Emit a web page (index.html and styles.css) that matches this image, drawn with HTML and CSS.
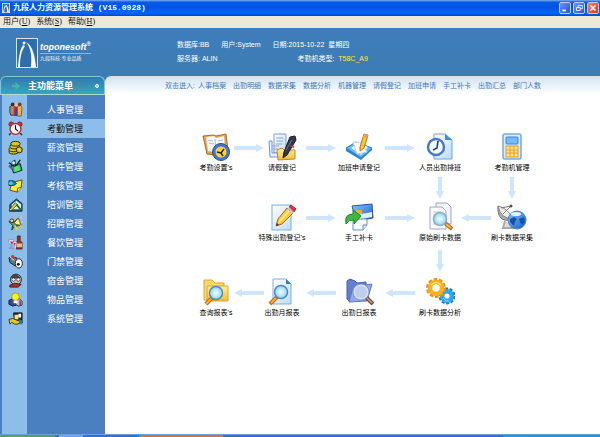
FILE: index.html
```html
<!DOCTYPE html>
<html lang="zh-CN">
<head>
    <meta charset="UTF-8">
    <meta name="viewport" content="width=device-width, initial-scale=1.0">
    <title>九段人力资源管理系统</title>
    <link rel="stylesheet" href="styles.css">
</head>
<body>
    <div class="titlebar">
        <svg class="app-icon" viewBox="0 0 22 30" preserveAspectRatio="none"><rect x="1" y="1" width="20" height="28" fill="#2f72b4" stroke="#fff" stroke-width="2"/><path d="M3 28Q5 13 9 7L11 9Q6 15 6 28z" fill="#fff"/><path d="M10 4Q17 9 19 28H14Q14 13 10 4z" fill="#fff"/></svg>
        <h1>九段人力资源管理系统 (V15.0928)</h1>
        <div class="window-buttons">
            <button class="win-btn" aria-label="最小化"><svg viewBox="0 0 12 12"><path d="M3 9h4" stroke="#fff" stroke-width="2"/></svg></button>
            <button class="win-btn" aria-label="还原"><svg viewBox="0 0 12 12"><path d="M5 5V3h5v4H8M3 5.500h4.500V9H3z" fill="none" stroke="#fff"/></svg></button>
            <button class="win-btn close" aria-label="关闭"><svg viewBox="0 0 12 12"><path d="M3 3l6 6M9 3L3 9" stroke="#fff" stroke-width="1.700"/></svg></button>
        </div>
    </div>

    <div class="menubar">
        <button>用户(<u>U</u>)</button>
        <button>系统(<u>S</u>)</button>
        <button>帮助(<u>H</u>)</button>
    </div>

    <header class="header">
        <div class="brand">
            <svg class="brand-mark" viewBox="0 0 22 30"><rect x=".5" y=".5" width="21" height="29" fill="#2f6eae" stroke="#d5e6f5"/><path d="M2 29C3 18 4 11 7 7L9 8C5 14 4 20 4 29z" fill="#fff"/><path d="M10 4C16 7 19 17 20 29H15C16 18 15 10 10 4z" fill="#fff"/><circle cx="8" cy="5" r="1.500" fill="#fff"/></svg>
            <div class="brand-text">
                <div class="brand-name">toponesoft<sup>®</sup></div>
                <div class="brand-slogan">九段科技.专业品质</div>
            </div>
        </div>
        <div class="session">
            <div class="session-row">
                <span>数据库:BB</span>
                <span>用户:System</span>
                <span>日期:2015-10-22&nbsp; 星期四</span>
            </div>
            <div class="session-row machine">
                <span>服务器: ALIN</span>
                <span>考勤机类型:&nbsp; <b>T58C_A9</b></span>
            </div>
        </div>
    </header>

    <div class="content">
        <aside class="sidebar">
            <div class="sidebar-title">
                <svg viewBox="0 0 9 9"><path d="M0 3h4V0l5 4.500L4 9V6H0z" fill="#4fb0a8"/></svg>
                <h2>主功能菜单</h2>
                <span class="dot"></span>
            </div>
            <nav class="menu">
                <a href="#"><span class="menu-icon"><svg viewBox="0 0 16 16"><path d="M2 5l3-2 2 2v9H3L2 11z" fill="#b98b62" stroke="#333"/><path d="M6 5l3-2 2 2v10H6z" fill="#e8272c"/><path d="M8 5l2 1v9H7z" fill="#2345d3"/><path d="M10 5l3-2 2 3-1 9h-4z" fill="#f4b12e" stroke="#6d3c16" stroke-width=".700"/><circle cx="5" cy="2.500" r="2" fill="#432a1c"/><circle cx="9" cy="3" r="2" fill="#e6c4a0"/><circle cx="12.500" cy="2.500" r="2" fill="#704029"/></svg></span><span class="menu-label">人事管理</span></a>
                <a href="#" class="active"><span class="menu-icon"><svg viewBox="0 0 16 16"><path d="M3 13l-2 2M13 13l2 2" stroke="#333" stroke-width="1.500"/><circle cx="3.500" cy="3.500" r="2.500" fill="#e52b2e" stroke="#222" stroke-width=".700"/><circle cx="12.500" cy="3.500" r="2.500" fill="#e52b2e" stroke="#222" stroke-width=".700"/><circle cx="8" cy="8.500" r="5.800" fill="#fff" stroke="#c9232c" stroke-width="1.500"/><path d="M8 4.500v4l3 2.500" fill="none" stroke="#111" stroke-width="1.200"/></svg></span><span class="menu-label">考勤管理</span></a>
                <a href="#"><span class="menu-icon"><svg viewBox="0 0 16 16"><g fill="#d8c51d" stroke="#232000"><ellipse cx="6" cy="12.500" rx="5" ry="2.500"/><ellipse cx="6" cy="10" rx="5" ry="2.500"/><ellipse cx="7" cy="7" rx="5" ry="2.500"/><ellipse cx="8" cy="4" rx="5" ry="2.500"/><circle cx="12" cy="10.500" r="3.200"/></g><path d="M11 9l2 2" stroke="#fff48a"/></svg></span><span class="menu-label">薪资管理</span></a>
                <a href="#"><span class="menu-icon"><svg viewBox="0 0 16 16"><path d="M3 7l10-2 2 7-9 3z" fill="#1eac53" stroke="#123" /><path d="M6 8l6-1 1 5-6 2z" fill="#5ee06f"/><path d="M1 4l6 4M7 1l1 7M13 1L9 7" stroke="#222" stroke-width="1.500"/><circle cx="6" cy="4" r="2" fill="#e9f5ff" stroke="#168"/><path d="M1 7l4 4" stroke="#704ab5" stroke-width="2"/></svg></span><span class="menu-label">计件管理</span></a>
                <a href="#"><span class="menu-icon"><svg viewBox="0 0 16 16"><path d="M4 5l11-3-1 8-4 5-8-2z" fill="#ffed2f" stroke="#5b4b00"/><path d="M14 10l-4 1v4" fill="#fffbb5" stroke="#695700"/><path d="M1 3h5l3 3-3 2H1z" fill="#1786b7" stroke="#043a60"/><circle cx="3" cy="5.500" r="2" fill="#52c9e2"/></svg></span><span class="menu-label">考核管理</span></a>
                <a href="#"><span class="menu-icon"><svg viewBox="0 0 16 16"><path d="M2 8l7-6 6 5v8H2z" fill="#26647d" stroke="#172c3d"/><path d="M4 8l5-4 5 4v5H4z" fill="#d9f3ea"/><path d="M1 14L8 6l2 2-7 7z" fill="#e2cd2e" stroke="#333" stroke-width=".700"/><path d="M9 8l5 6" stroke="#126a38" stroke-width="2"/><path d="M1 15h14" stroke="#333"/></svg></span><span class="menu-label">培训管理</span></a>
                <a href="#"><span class="menu-icon"><svg viewBox="0 0 16 16"><path d="M1 6l5 1 4-4 3 7-6 1-3 4 1-5z" fill="#38a690" stroke="#203c3b"/><path d="M7 7l4-5 3 8-6-1z" fill="#fff17b" stroke="#69591c"/><circle cx="4" cy="5" r="2" fill="#f3c3a1" stroke="#432"/><path d="M13 2l2-1M14 6h2M13 10l2 2" stroke="#f8dc00" stroke-width="1.500"/><path d="M7 10l3 5" stroke="#ecd11f" stroke-width="2"/></svg></span><span class="menu-label">招聘管理</span></a>
                <a href="#"><span class="menu-icon"><svg viewBox="0 0 16 16"><path d="M10 1h3v5l2 2v7H9V8l1-2z" fill="#993422" stroke="#391613" stroke-width=".700"/><path d="M9 9h6v4H9z" fill="#e5bb8b"/><path d="M1 5h5v3L4 10v4h2H1h2v-4L1 8z" fill="#f7f0ff" stroke="#8293b5"/><path d="M2 7h4l-2 3z" fill="#d5233f"/><path d="M6 8h3L8 11v3" fill="#d6315b" stroke="#fff" stroke-width=".700"/></svg></span><span class="menu-label">餐饮管理</span></a>
                <a href="#"><span class="menu-icon"><svg viewBox="0 0 16 16"><path d="M1 4h8l2 4-3 5-6-4z" fill="#647987" stroke="#1b232a"/><circle cx="5" cy="3" r="2" fill="#d83238"/><ellipse cx="11.500" cy="10" rx="3.800" ry="5" fill="#f7f7ed" stroke="#222"/><circle cx="11" cy="11" r="1.500" fill="#141414"/><path d="M2 3l5 4" stroke="#d9e9ef"/></svg></span><span class="menu-label">门禁管理</span></a>
                <a href="#"><span class="menu-icon"><svg viewBox="0 0 16 16"><circle cx="8.500" cy="7" r="5.800" fill="#c4c8c7" stroke="#222"/><path d="M3 5Q5 0 10 2l4 3-8 1z" fill="#444"/><circle cx="6" cy="7" r="1.800" fill="#fff" stroke="#222" stroke-width=".700"/><circle cx="11" cy="7" r="1.800" fill="#fff" stroke="#222" stroke-width=".700"/><path d="M2 13l5-2 7 1-3 3H2z" fill="#b83128" stroke="#351a17"/></svg></span><span class="menu-label">宿舍管理</span></a>
                <a href="#"><span class="menu-icon"><svg viewBox="0 0 16 16"><path d="M1 9l4-2 4 2v5l-4 1-4-2z" fill="#3549a0" stroke="#111a3b"/><path d="M9 9l3-2 3 3v4l-4 1-3-2z" fill="#b8c4dc" stroke="#28314e"/><path d="M12 9h2v5h-2z" fill="#b23a3e"/><circle cx="8" cy="5" r="4" fill="#ffef25" stroke="#9f8700" stroke-width=".700"/><path d="M6 9h4v3H6z" fill="#fff"/></svg></span><span class="menu-label">物品管理</span></a>
                <a href="#"><span class="menu-icon"><svg viewBox="0 0 16 16"><path d="M6 2h9v11H7z" fill="#272b28" stroke="#111"/><path d="M7 4h4v5H7z" fill="#f4df8b"/><path d="M11 3h3v4h-3z" fill="#f6f6f0"/><path d="M1 9l4-1 5 2 3 1-2 3H7l-3-2-2 2z" fill="#e4c927" stroke="#453b00"/><path d="M12 9l3 1v4h-3z" fill="#3175ba"/></svg></span><span class="menu-label">系统管理</span></a>
            </nav>
        </aside>

        <main class="main">
            <div class="quick-links">
                <span>双击进入:</span>
                <a href="#">人事档案</a>
                <a href="#">出勤明细</a>
                <a href="#">数据采集</a>
                <a href="#">数据分析</a>
                <a href="#">机器管理</a>
                <a href="#">请假登记</a>
                <a href="#">加班申请</a>
                <a href="#">手工补卡</a>
                <a href="#">出勤汇总</a>
                <a href="#">部门人数</a>
            </div>

            <svg class="defs" aria-hidden="true">
                <defs>
                    <linearGradient id="paper" x2="1" y2="1"><stop stop-color="#fff"/><stop offset="1" stop-color="#bcdcf8"/></linearGradient>
                    <linearGradient id="gold" x2="0" y2="1"><stop stop-color="#fff19a"/><stop offset="1" stop-color="#f6bd31"/></linearGradient>
                    <linearGradient id="blue" x2="1" y2="1"><stop stop-color="#89c8ff"/><stop offset="1" stop-color="#155bc4"/></linearGradient>
                    <radialGradient id="lens"><stop stop-color="#f2ffff"/><stop offset="1" stop-color="#8cd7f5"/></radialGradient>
                    <symbol id="arrow" viewBox="0 0 30 8"><path d="M0 2h22V0l8 4-8 4V6H0z" fill="#cfe5fd"/></symbol>
                    <symbol id="arrow-down" viewBox="0 0 8 22"><path d="M2 0v14H0l4 8 4-8H6V0z" fill="#cfe5fd"/></symbol>
                </defs>
            </svg>

            <div class="flow">
                <!-- row 1 -->
                <button class="node r1 c1">
                    <svg viewBox="0 0 30 30"><path d="M2 4l11-1 2 1 10-2 2 17-12 4-9-1z" fill="#e9a44b" stroke="#b4692a"/><path d="M5 5l8-1 2 2 8-2 1 14-10 2-7-1z" fill="#f7faff"/><path d="M14 7l1 13M7 8l5 1M8 11l5 1M17 9l5-1" stroke="#a7bdd9"/><circle cx="20" cy="20" r="8.500" fill="#4776ce" stroke="#254999"/><circle cx="20" cy="20" r="5.500" fill="#ffd43a"/><path d="M16 20l4 1 3-4M20 21l2 3" fill="none" stroke="#222" stroke-width="1.500"/></svg>
                    <span>考勤设置's</span>
                </button>
                <svg class="arrow r1 c2"><use href="#arrow"/></svg>
                <button class="node r1 c3">
                    <svg viewBox="0 0 30 30"><path d="M7 2h12v19H7z" fill="url(#paper)" stroke="#809bcf"/><path d="M2 9h3v12h9v4H3z" fill="#e7f3ff" stroke="#7194ce"/><path d="M9 6h7M9 9h7M9 12h6M5 14h7M5 17h6" stroke="#8aa6da"/><path d="M10 18l5-2 2 2h11v9l-17 1z" fill="url(#gold)" stroke="#bc8635"/><path d="M23 5l5-1 1 4-9 15-4 3 1-6z" fill="#353749" stroke="#17192a"/><path d="M25 8l-6 10" stroke="#77758e"/><path d="M24 14l3 1" stroke="#c54149" stroke-width="2"/></svg>
                    <span>请假登记</span>
                </button>
                <svg class="arrow r1 c4"><use href="#arrow"/></svg>
                <button class="node r1 c5">
                    <svg viewBox="0 0 30 30"><path d="M2 16l10-6 16 6-11 10z" fill="#68b7f4" stroke="#277dcf"/><path d="M2 16v3l15 9 11-10v-2L17 26z" fill="#2783d5"/><path d="M7 16l7-5 10 4-7 8z" fill="#e7f6ff"/><path d="M9 10l9 1 5 9-10 2z" fill="#fff" stroke="#bdd3e4"/><path d="M20 2l4 1-4 13-4 3v-4z" fill="#ffc72f" stroke="#c46e1f"/><path d="M20 2l4 1-1 3-4-1z" fill="#f59c65"/></svg>
                    <span>加班申请登记</span>
                </button>
                <svg class="arrow r1 c6"><use href="#arrow"/></svg>
                <button class="node r1 c7">
                    <svg viewBox="0 0 30 30"><path d="M9 2h11l7 6v19H9z" fill="url(#paper)" stroke="#6ca3dd"/><path d="M20 2v6h7z" fill="#3f8edb"/><circle cx="11" cy="15" r="8" fill="#f7fbff" stroke="#4779cd" stroke-width="2.500"/><path d="M13 9l-1 7-4 2" fill="none" stroke="#27466b" stroke-width="1.700"/></svg>
                    <span>人员出勤排班</span>
                </button>
                <button class="node r1 c9">
                    <svg viewBox="0 0 30 30"><rect x="6" y="2" width="18" height="25" rx="2" fill="#d9edff" stroke="#7aa9d9" stroke-width="1.500"/><rect x="9" y="5" width="12" height="7" rx="1" fill="#76b9ff" stroke="#3a83d3"/><rect x="9" y="14" width="12" height="11" fill="#ffe48a" stroke="#e89a1e"/><path d="M13 14v11M17 14v11M9 18h12M9 21h12" stroke="#f0a02a"/></svg>
                    <span>考勤机管理</span>
                </button>

                <svg class="arrow-down d1 c7"><use href="#arrow-down"/></svg>
                <svg class="arrow-down d1 c9"><use href="#arrow-down"/></svg>

                <!-- row 2 -->
                <button class="node r2 c3">
                    <svg viewBox="0 0 30 30"><rect x="5" y="3" width="19" height="25" fill="url(#paper)" stroke="#7aafe0"/><path d="M20 6l6 5-11 11-6 2 2-7z" fill="#ffc83d" stroke="#a96819"/><path d="M23 8L12 20" stroke="#fff1a0" stroke-width="1.500"/><path d="M22 5l2-2 5 4-2 3z" fill="#e6323d" stroke="#b8222c"/><path d="M20 7l2-2 5 5-2 2z" fill="#bfc5d0"/><path d="M9 24l1-3 2 2z" fill="#333"/></svg>
                    <span>特殊出勤登记's</span>
                </button>
                <svg class="arrow r2 c4"><use href="#arrow"/></svg>
                <button class="node r2 c5">
                    <svg viewBox="0 0 30 30"><path d="M8 4l20-2 1 14-17 3z" fill="url(#blue)" stroke="#2556a1"/><path d="M12 13l16-3v5l-15 3z" fill="#e1f0ff"/><path d="M9 17h14v6l-4 5H9z" fill="#f5faff" stroke="#6d8fc6"/><path d="M19 28v-5h4" fill="#d2e2f8" stroke="#6d8fc6"/><path d="M12 8h6v4h-6z" fill="#f5aa30"/><path d="M2 22Q0 12 9 12V8l8 6-7 8v-4Q5 17 2 22z" fill="#3eb93a" stroke="#19822c"/></svg>
                    <span>手工补卡</span>
                </button>
                <svg class="arrow r2 c6"><use href="#arrow"/></svg>
                <button class="node r2 c7">
                    <svg viewBox="0 0 30 30"><path d="M11 1h11l4 4v17H11z" fill="#f1f3ff" stroke="#a4a1bf"/><path d="M5 5h12l4 4v18H5z" fill="#f9f9ff" stroke="#aaa5c0"/><path d="M8 10h8M8 13h9M8 22h10" stroke="#c7c4dc"/><path d="M20 21l7 6" stroke="#a76724" stroke-width="4"/><path d="M21 22l5 4" stroke="#ffb43e" stroke-width="2"/><circle cx="15" cy="17" r="6.500" fill="url(#lens)" stroke="#8dacc8" stroke-width="1.500"/></svg>
                    <span>原始刷卡数据</span>
                </button>
                <svg class="arrow left r2 c8"><use href="#arrow"/></svg>
                <button class="node r2 c9">
                    <svg viewBox="0 0 30 30"><path d="M8 19l-2 7h13" fill="#ddd" stroke="#aaa" stroke-width="2"/><path d="M1 4q-1 9 4 13 6 3 11-1z" fill="#a9abae" stroke="#777"/><path d="M1 4q9 2 15 12-12 2-15-12z" fill="#eee" stroke="#888"/><path d="M6 12l8-8M4 6l10-2" stroke="#777"/><circle cx="14" cy="4" r="1.500" fill="#555"/><circle cx="20" cy="18" r="9" fill="url(#blue)" stroke="#3984d1"/><path d="M13 17l4-2 3 2-2 3-1 4-4-4zM22 17l5-2 1 5-3 3-2-3z" fill="#1750a8"/><ellipse cx="19" cy="12" rx="5" ry="2" fill="#dff4ff"/></svg>
                    <span>刷卡数据采集</span>
                </button>

                <svg class="arrow-down d2 c7"><use href="#arrow-down"/></svg>

                <!-- row 3 -->
                <button class="node r3 c1">
                    <svg viewBox="0 0 30 30"><path d="M3 3h8l3 3h9v17H3z" fill="#ffda62" stroke="#dca23a"/><path d="M6 9h21v15H6z" fill="url(#gold)" stroke="#d7a238"/><path d="M11 21l-6 6" stroke="#b76a20" stroke-width="4"/><path d="M10 22l-5 5" stroke="#ffae37" stroke-width="2"/><circle cx="15" cy="16" r="6.500" fill="url(#lens)" stroke="#5688c3" stroke-width="1.500"/></svg>
                    <span>查询报表's</span>
                </button>
                <svg class="arrow left r3 c2"><use href="#arrow"/></svg>
                <button class="node r3 c3">
                    <svg viewBox="0 0 30 30"><path d="M6 2h13l5 5v20H6z" fill="url(#paper)" stroke="#79afe3"/><path d="M19 2v5h5z" fill="#2683cb"/><path d="M10 20l-7 7" stroke="#b76a20" stroke-width="4"/><path d="M9 21l-5 5" stroke="#ffae37" stroke-width="2"/><circle cx="14" cy="15" r="6.500" fill="url(#lens)" stroke="#5688c3" stroke-width="1.500"/></svg>
                    <span>出勤月报表</span>
                </button>
                <svg class="arrow left r3 c4"><use href="#arrow"/></svg>
                <button class="node r3 c5">
                    <svg viewBox="0 0 30 30"><path d="M3 4l3-2 5 2 2 2 9-1v7L6 25l-3-3z" fill="#647fce" stroke="#4260b4"/><path d="M9 10l19-3-5 17-18 1z" fill="#91a9e8" stroke="#5875c7"/><path d="M22 20l7 7" stroke="#74523f" stroke-width="4"/><path d="M23 21l5 5" stroke="#c29c7f" stroke-width="1.500"/><circle cx="17" cy="15" r="7" fill="#bdceef" stroke="#d6dfec" stroke-width="2"/><circle cx="17" cy="15" r="8" fill="none" stroke="#7889b0" stroke-width=".700"/></svg>
                    <span>出勤日报表</span>
                </button>
                <svg class="arrow left r3 c6"><use href="#arrow"/></svg>
                <button class="node r3 c7">
                    <svg viewBox="0 0 30 30"><circle cx="22" cy="19" r="7" fill="none" stroke="#1479cc" stroke-width="3" stroke-dasharray="3 1.400"/><circle cx="22" cy="19" r="4.800" fill="none" stroke="#2fa6f2" stroke-width="4.500"/><path d="M18 21q2 4 6 3" fill="none" stroke="#8bd3ff"/><circle cx="11" cy="11" r="8.500" fill="none" stroke="#ee8f14" stroke-width="3" stroke-dasharray="3.600 1.740"/><circle cx="11" cy="11" r="6" fill="none" stroke="#ffae1c" stroke-width="4.500"/><path d="M6 8q5-5 10 0" fill="none" stroke="#ffe460" stroke-width="1.500"/></svg>
                    <span>刷卡数据分析</span>
                </button>
            </div>
        </main>
    </div>

    <footer class="taskbar">
        <span class="start"></span>
        <span class="task light"></span>
        <span class="task orange"></span>
        <span class="tray"></span>
    </footer>
</body>
</html>
```
FILE: styles.css
```css
* {
    box-sizing: border-box;
}
body {
    margin: 0;
    min-height: 100vh;
    display: flex;
    flex-direction: column;
    font-family: "Liberation Sans", "Noto Sans CJK SC", sans-serif;
    font-size: 7px;
    line-height: 12px;
    background: #fff;
}
button {
    padding: 0;
    border: 0;
    background: none;
    font: inherit;
    color: inherit;
}
a {
    color: inherit;
    text-decoration: none;
}
svg {
    display: block;
}

/* window chrome */
.titlebar {
    height: 16px;
    display: flex;
    align-items: center;
    padding: 0 1px 0 2px;
    background: linear-gradient(#7db2f5 0, #0a5be8 2px, #0054e0 7px, #0466fb 13px, #0048c8 16px);
    color: #fff;
}
.app-icon {
    width: 8px;
    height: 10px;
    margin-right: 3px;
}
.titlebar h1 {
    margin: 0;
    flex: 1;
    font-family: "Liberation Mono", "Noto Sans CJK SC", monospace;
    font-size: 8px;
    font-weight: bold;
}
.window-buttons {
    display: flex;
    gap: 2px;
}
.win-btn {
    width: 12px;
    height: 12px;
    border: 1px solid #b9cdf6;
    border-radius: 2px;
    background: linear-gradient(135deg, #6b94f0, #2455d4);
}
.win-btn.close {
    background: linear-gradient(135deg, #f0886a, #d63a13);
}
.win-btn svg {
    width: 10px;
    height: 10px;
}
.menubar {
    height: 12px;
    display: flex;
    gap: 6px;
    padding-left: 3px;
    background: #ece9d8;
    font-family: "Liberation Serif", "Noto Sans CJK SC", serif;
    font-size: 8px;
    color: #111;
}

/* header */
.header {
    height: 48px;
    display: flex;
    padding: 10px 0 0 16px;
    background: linear-gradient(#407cbb, #3c7db3);
    color: #fff;
}
.brand {
    width: 161px;
    display: flex;
    gap: 2px;
}
.brand-mark {
    width: 22px;
    height: 30px;
}
.brand-text {
    padding-top: 3px;
}
.brand-name {
    font-size: 9px;
    font-weight: bold;
    font-style: italic;
    border-bottom: 1px solid #8db4dc;
}
.brand-name sup {
    font-size: 6px;
    font-style: normal;
    line-height: 0;
}
.brand-slogan {
    font-size: 5px;
    line-height: 8px;
}
.session {
    padding-top: 1px;
}
.session-row {
    display: flex;
    gap: 12px;
    margin-bottom: 2px;
    white-space: nowrap;
}
.machine {
    justify-content: space-between;
    gap: 80px;
}
.machine b {
    font-weight: normal;
    color: #f0f03c;
}

/* body */
.content {
    flex: 1;
    display: flex;
    background: #3c7db3;
}
.sidebar {
    width: 105px;
    display: flex;
    flex-direction: column;
}
.sidebar-title {
    height: 19px;
    display: flex;
    align-items: center;
    gap: 8px;
    padding: 0 5px 0 11px;
    border: 1px solid #8cc3d8;
    border-bottom-color: #a9dcd9;
    border-radius: 6px 6px 0 0;
    background: linear-gradient(#2e79b1, #3ba5b9);
    color: #fff;
}
.sidebar-title svg {
    width: 8px;
    height: 8px;
}
.sidebar-title h2 {
    margin: 0;
    font-size: 9px;
    font-weight: bold;
}
.dot {
    width: 4px;
    height: 4px;
    margin-left: auto;
    border: 1px solid #fff;
    border-radius: 50%;
    background: #6fb9cc;
}
.menu {
    flex: 1;
    padding: 5px 0 0 2px;
    background: linear-gradient(90deg, #4a80c0 2px, #8dbde9 2px, #8dbde9 27px, #4a80c0 27px);
}
.menu a {
    height: 19px;
    display: flex;
    align-items: center;
    color: #fff;
    font-size: 9px;
}
.menu a.active {
    background: #8dbde9;
    color: #111;
}
.menu-icon {
    width: 25px;
    padding-left: 6px;
}
.menu-icon svg {
    width: 15px;
    height: 15px;
}
.menu-label {
    flex: 1;
    padding-right: 2px;
    text-align: center;
}
.main {
    flex: 1;
    border-radius: 6px 0 0 0;
    background: linear-gradient(#d3e2f0, #fff 18px);
}
.quick-links {
    height: 20px;
    display: flex;
    align-items: center;
    gap: 7px;
    padding-left: 60px;
    color: #3f78b8;
    white-space: nowrap;
}
.quick-links span {
    margin-right: -4px;
}

/* flow chart */
.defs {
    width: 0;
    height: 0;
}
.flow {
    display: grid;
    grid-template-columns: 32px 34px 32px 45px 32px 49px 32px 40px 32px;
    grid-template-rows: 42px 28px 42px 33px 42px;
    padding: 36px 0 0 95px;
    color: #000;
}
.node {
    display: flex;
    flex-direction: column;
    align-items: center;
    white-space: nowrap;
}
.node svg {
    width: 30px;
    height: 30px;
    flex-shrink: 0;
}
.arrow {
    width: 30px;
    height: 8px;
    margin-top: 12px;
    justify-self: center;
}
.arrow.left {
    transform: scaleX(-1);
}
.arrow-down {
    width: 8px;
    height: 22px;
    place-self: center;
}
.r1 { grid-row: 1; }
.d1 { grid-row: 2; }
.r2 { grid-row: 3; }
.d2 { grid-row: 4; }
.r3 { grid-row: 5; }
.c1 { grid-column: 1; }
.c2 { grid-column: 2; }
.c3 { grid-column: 3; }
.c4 { grid-column: 4; }
.c5 { grid-column: 5; }
.c6 { grid-column: 6; }
.c7 { grid-column: 7; }
.c8 { grid-column: 8; }
.c9 { grid-column: 9; }

/* taskbar */
.taskbar {
    height: 3px;
    display: flex;
    background: #2a72dc;
    border-top: 1px solid #6f9be0;
}
.start {
    width: 55px;
    background: #4fa845;
}
.task.light {
    width: 24px;
    margin-left: 4px;
    background: #6aa4f4;
}
.task.orange {
    width: 84px;
    margin-left: 56px;
    background: #c9783f;
}
.tray {
    width: 97px;
    margin-left: auto;
    background: #109ceb;
}
```
